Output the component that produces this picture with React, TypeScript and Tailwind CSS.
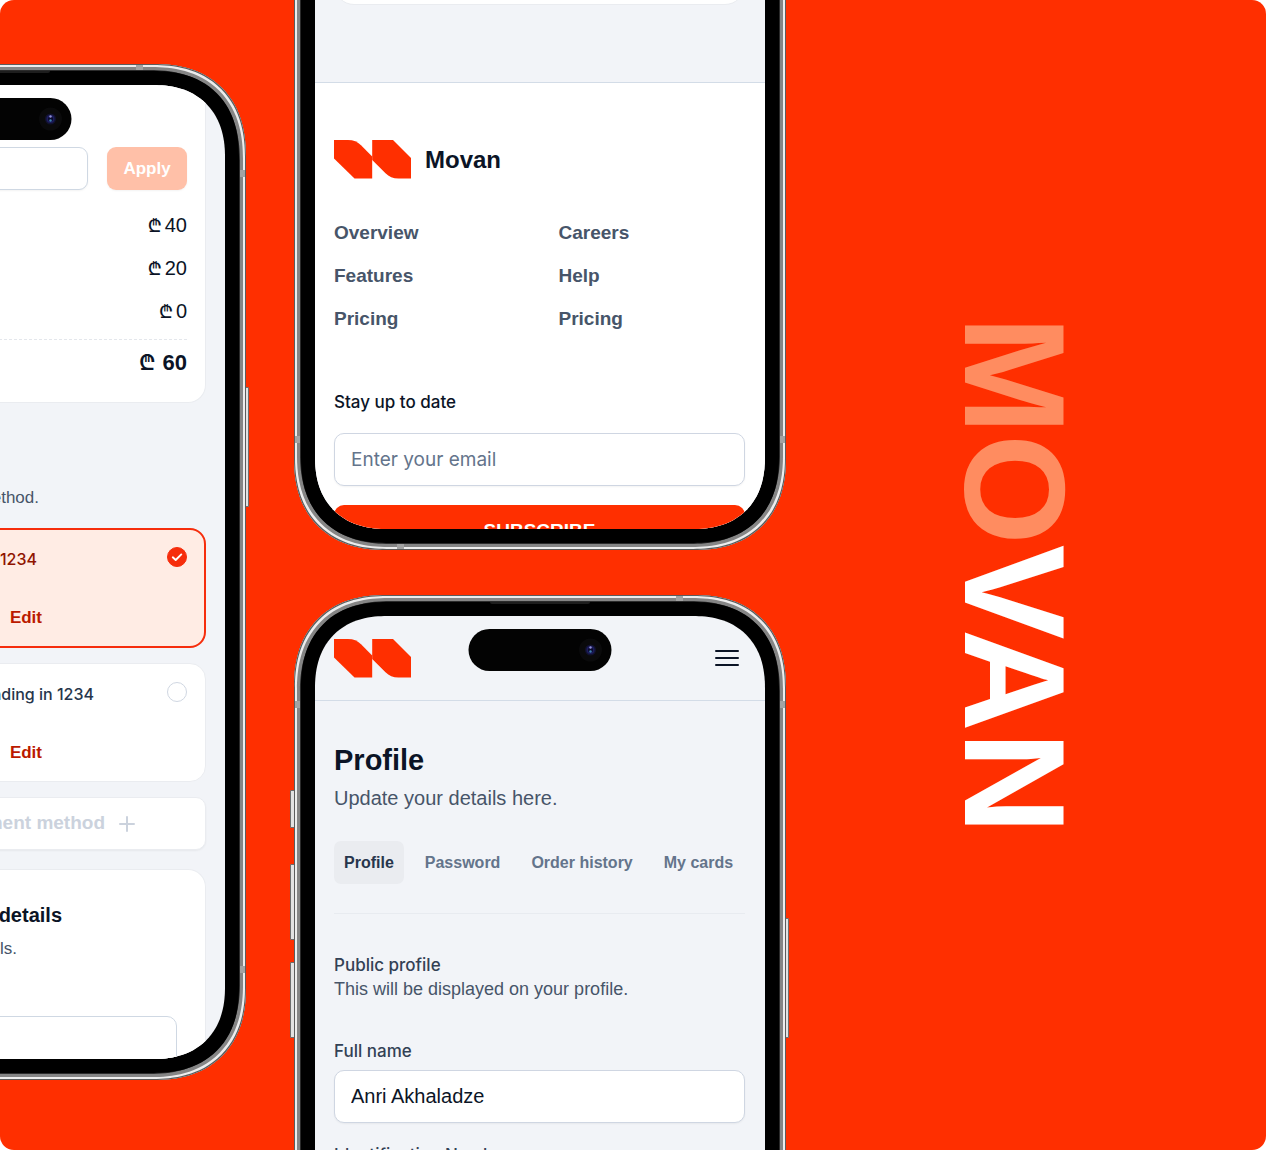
import type { ReactNode } from "react";

function Logo() {
  return (
    <svg className="h-[39px] w-[77px] shrink-0" viewBox="0 0 77 39" fill="#ff2f00" role="img" aria-label="Movan logo">
      <path d="M0 0H14C19.5 0 23.500 1.800 27 5.200L38.200 16.500V38.500H20.500L0 18.500Z" />
      <path d="M38.200 0H59L77 18V38.500H64.500C59 38.500 55 36.700 51.500 33.200L38.200 20Z" />
    </svg>
  );
}

function Camera() {
  return (
    <svg className="size-6" viewBox="0 0 24 24" aria-hidden="true">
      <circle cx="12" cy="12" r="11.500" fill="#0a0a0b" />
      <circle cx="12" cy="12" r="5.500" fill="#12122e" />
      <circle cx="12" cy="12" r="4" fill="#1c1c5e" />
      <circle cx="12" cy="12" r="2.500" fill="#0b0b2c" />
      <circle cx="12" cy="9.500" r="1.200" fill="#8f8fd6" />
      <circle cx="12" cy="13.500" r="1.200" fill="#3f7fb0" />
    </svg>
  );
}

function Phone({ children, className = "", top = true }: { children: ReactNode; className?: string; top?: boolean }) {
  return (
    <div className={`relative w-[492px] shrink-0 ${className}`}>
      {top && (
        <>
          {/* side keys */}
          <i className="absolute top-[195px] -left-1 h-[38px] w-[5px] rounded-l-[1px] border border-[#6d6d6d] bg-[#e2e2e2]" />
          <i className="absolute top-[269px] -left-1 h-[76px] w-[5px] rounded-l-[1px] border border-[#6d6d6d] bg-[#e2e2e2]" />
          <i className="absolute top-[367px] -left-1 h-[76px] w-[5px] rounded-l-[1px] border border-[#6d6d6d] bg-[#e2e2e2]" />
          <i className="absolute top-[323px] -right-[3px] h-[120px] w-1 rounded-r-[1px] border border-[#6d6d6d] bg-[#e2e2e2]" />
        </>
      )}
      <div className="relative rounded-[84px] bg-[#2b2b2b] p-[7px] shadow-[inset_0_0_0_1px_#5c5c5c,inset_0_0_0_3px_#ededed,inset_0_0_0_6px_#858585] supports-[corner-shape:squircle]:rounded-[92px] supports-[corner-shape:squircle]:[corner-shape:superellipse(1.2)]">
        {/* antenna bands */}
        <i className="absolute top-px right-[103px] h-[5px] w-[7px] bg-[#a3a3a3]" />
        <i className="absolute bottom-px left-[103px] h-[5px] w-[7px] bg-[#a3a3a3]" />
        <i className="absolute top-[106px] left-px h-[7px] w-[5px] bg-[#a3a3a3]" />
        <i className="absolute top-[106px] right-px h-[7px] w-[5px] bg-[#a3a3a3]" />
        <i className="absolute bottom-[107px] left-px h-[7px] w-[5px] bg-[#a3a3a3]" />
        <i className="absolute right-px bottom-[107px] h-[7px] w-[5px] bg-[#a3a3a3]" />
        <i className="absolute top-[7px] left-1/2 z-10 h-[2px] w-[100px] -translate-x-1/2 rounded-b-sm bg-[#1d1d1d]" />
        <div className="rounded-[77px] bg-black p-[14px] supports-[corner-shape:squircle]:rounded-[85px] supports-[corner-shape:squircle]:[corner-shape:superellipse(1.2)]">
          <div className="relative overflow-hidden rounded-[64px] bg-[#f2f4f8] supports-[corner-shape:squircle]:rounded-[72px] supports-[corner-shape:squircle]:[corner-shape:superellipse(1.2)]">
            {children}
            {top && (
              <div className="absolute top-[13px] left-1/2 flex h-[42px] w-[143px] -translate-x-1/2 items-center justify-end rounded-full bg-[#030303] pr-[9px]">
                <Camera />
              </div>
            )}
          </div>
        </div>
      </div>
    </div>
  );
}

const prices = ["40", "20", "0"];

function PaymentCard({ id, selected = false, children }: { id: string; selected?: boolean; children: ReactNode }) {
  return (
    <div
      className={
        selected
          ? "rounded-[16px] border-2 border-[#f62d0c] bg-[#ffece4] p-[17px] pb-4"
          : "rounded-[16px] border border-[#eaecf0] bg-white p-[18px] pb-4"
      }
    >
      <div className="flex items-start justify-between">
        <div className="w-[280px]">
          {children}
          <div className="mt-[35px] flex justify-end pr-[52px] text-[17px] leading-6 font-bold text-[#bb1a00]">
            <button type="button">Edit</button>
          </div>
        </div>
        <span className="relative size-5 shrink-0">
          <input
            id={id}
            type="radio"
            name="payment"
            defaultChecked={selected}
            className="block size-5 appearance-none rounded-full border border-[#d0d7e2] bg-white checked:border-[#f62d0c] checked:bg-[#f62d0c]"
          />
          {selected && (
            <svg className="pointer-events-none absolute inset-0 size-5" viewBox="0 0 20 20" fill="none" stroke="#fff" strokeWidth="1.900" strokeLinecap="round" strokeLinejoin="round" aria-hidden="true">
              <path d="M5.800 10.300L8.700 13L14.300 7.400" />
            </svg>
          )}
        </span>
      </div>
    </div>
  );
}

function CheckoutPhone() {
  return (
    <Phone>
      <div className="h-[974px] pr-[19px] pl-5">
        <section className="rounded-b-[18px] border border-t-0 border-[#eaecf0] bg-white px-[18px] pt-[62px] pb-[17px]">
          <div className="flex gap-[19px]">
            <input
              aria-label="Promo code"
              className="h-[43px] min-w-0 flex-1 rounded-[9px] border border-[#cfd8e3] bg-white px-4 text-[19px] shadow-xs outline-none"
            />
            <button type="button" className="h-[43px] w-[80px] rounded-[9px] bg-[#ffc0a8] text-[17px] font-bold text-white shadow-xs">
              Apply
            </button>
          </div>
          <ul className="mt-[13px] text-[#0b1426]">
            {prices.map((p) => (
              <li key={p} className="flex h-[43px] items-center justify-end gap-[3px] text-[20px]">
                <span className="font-['Noto_Sans'] text-[18px] leading-none font-medium">₾</span>
                {p}
              </li>
            ))}
            <li className="mt-[7px] flex h-[46px] items-center justify-end gap-[7px] border-t border-dashed border-[#e4e7ec] text-[22px] font-bold">
              <span className="font-['Noto_Sans'] text-[21px] leading-none font-semibold">₾</span>60
            </li>
          </ul>
        </section>

        <section className="pt-[83px]">
          <p className="w-[244px] text-right text-[17px] leading-6 whitespace-nowrap text-[#475569]">method.</p>
          <div className="mt-[18px] flex flex-col gap-[15px]">
            <PaymentCard id="card-1" selected>
              <label htmlFor="card-1" className="block pr-[57px] text-right font-['Inter'] text-[16px] leading-6 font-medium text-[#8f1400]">
                in 1234
              </label>
            </PaymentCard>
            <PaymentCard id="card-2">
              <label htmlFor="card-2" className="block text-right font-['Inter'] text-[16px] leading-6 font-medium text-[#27364c]">
                ending in 1234
              </label>
            </PaymentCard>
            <button
              type="button"
              className="flex h-[53px] items-center justify-end gap-[14px] rounded-[10px] border border-[#eaecf0] bg-white pr-[70px] text-[19px] font-bold text-[#cbd2dd] shadow-xs"
            >
              payment method
              <svg className="size-4" viewBox="0 0 16 16" stroke="currentColor" strokeWidth="2" strokeLinecap="round" aria-hidden="true">
                <path d="M8 1V15M1 8H15" />
              </svg>
            </button>
          </div>
        </section>

        <section className="mt-[19px] rounded-t-[18px] border border-b-0 border-[#eaecf0] bg-white px-[28px] pt-[31px] pb-20">
          <h2 className="w-[238px] text-right text-[20px] leading-7 font-bold text-[#0b1426]">details</h2>
          <p className="mt-[8px] w-[193px] text-right text-[17px] leading-6 text-[#475569]">details.</p>
          <input
            aria-label="Name"
            className="mt-[55px] block h-[53px] w-full rounded-[10px] border border-[#cfd8e3] bg-white px-4 outline-none"
          />
        </section>
      </div>
    </Phone>
  );
}

const footerLinks = ["Overview", "Careers", "Features", "Help", "Pricing", "Pricing"];

function FooterPhone() {
  return (
    <Phone className="-mt-[120px]" top={false}>
      <div className="h-[628px]">
        <div className="border-b border-[#d3dce7] pt-5 pr-5 pb-[77px] pl-[19px]">
          <div className="h-[84px] rounded-[20px] border border-[#eaecf0] bg-white" />
        </div>
        <footer className="bg-white pt-[57px] pr-5 pl-[19px]">
          <div className="flex items-center gap-[14px]">
            <Logo />
            <span className="text-[24px] leading-none font-bold text-[#0b1426]">Movan</span>
          </div>
          <nav className="mt-[42px] grid grid-cols-2 gap-x-[38px] gap-y-[19px]">
            {footerLinks.map((t, i) => (
              <a key={i} href="#" className="text-[19px] leading-6 font-bold text-[#475569]">
                {t}
              </a>
            ))}
          </nav>
          <form className="mt-[59px]">
            <label htmlFor="email" className="block font-['Inter'] text-[17px] leading-6 font-medium text-[#0b1426]">
              Stay up to date
            </label>
            <input
              id="email"
              type="email"
              placeholder="Enter your email"
              className="mt-[19px] block h-[53px] w-full rounded-[10px] border border-[#cfd6e2] bg-white px-4 font-['Inter'] text-[19px] shadow-xs outline-none placeholder:text-[#64748b]"
            />
            <button type="button" className="mt-[19px] block h-[53px] w-full rounded-[10px] bg-[#ff2f00] text-[19px] font-bold text-white">
              SUBSCRIBE
            </button>
          </form>
        </footer>
      </div>
    </Phone>
  );
}

const tabs = ["Profile", "Password", "Order history", "My cards"];

function ProfilePhone() {
  return (
    <Phone>
      <header className="flex h-[85px] items-center justify-between border-b border-[#d3dce7] pr-5 pl-[19px]">
        <Logo />
        <button type="button" aria-label="Open menu" className="flex flex-col gap-[5px] p-[6px]">
          <span className="h-[2px] w-6 rounded-full bg-[#0b1426]" />
          <span className="h-[2px] w-6 rounded-full bg-[#0b1426]" />
          <span className="h-[2px] w-6 rounded-full bg-[#0b1426]" />
        </button>
      </header>
      <main className="pt-[41px] pr-5 pb-16 pl-[19px]">
        <h1 className="text-[29px] leading-9 font-bold text-[#0b1426]">Profile</h1>
        <p className="mt-[6px] text-[20px] leading-7 text-[#475569]">Update your details here.</p>
        <div role="tablist" className="mt-[29px] flex gap-[11px]">
          {tabs.map((t, i) => (
            <button
              key={t}
              type="button"
              role="tab"
              aria-selected={i === 0}
              className={`h-[43px] shrink-0 rounded-[7px] px-[10px] text-[16px] font-bold ${i === 0 ? "bg-[#eaecf0] text-[#27364c]" : "text-[#64748b]"}`}
            >
              {t}
            </button>
          ))}
        </div>
        <hr className="mt-[29px] border-[#e8ebf0]" />
        <h2 className="mt-[39px] font-['Inter'] text-[17px] leading-6 font-medium text-[#334155]">Public profile</h2>
        <p className="text-[18px] leading-6 text-[#475569]">This will be displayed on your profile.</p>
        <form className="mt-[38px] font-['Inter'] text-[17px] leading-6 font-medium text-[#334155]">
          <label htmlFor="fullname" className="block">Full name</label>
          <input
            id="fullname"
            defaultValue="Anri Akhaladze"
            className="mt-[7px] block h-[53px] w-full rounded-[10px] border border-[#cfd6e2] bg-white px-4 font-['Liberation_Sans'] text-[20px] font-normal text-[#0b1426] shadow-xs outline-none"
          />
          <label htmlFor="idnumber" className="mt-5 block">Identification Number</label>
          <input
            id="idnumber"
            className="mt-[7px] block h-[53px] w-full rounded-[10px] border border-[#cfd6e2] bg-white px-4 outline-none"
          />
        </form>
      </main>
    </Phone>
  );
}

export default function App() {
  return (
    <div className="bg-white">
      <div className="flex h-screen gap-12 overflow-hidden rounded-[14px] bg-[#ff2f00] font-['Liberation_Sans',Arial,sans-serif]">
        <div className="flex w-[246px] shrink-0 justify-end pt-16">
          <CheckoutPhone />
        </div>
        <div className="flex shrink-0 flex-col gap-[45px]">
          <FooterPhone />
          <ProfilePhone />
        </div>
        <div className="flex min-w-0 flex-1 items-center justify-center pr-[73px]">
          <p className="text-[142px] leading-none font-bold whitespace-nowrap text-white [writing-mode:vertical-rl]">
            <span className="text-[#ff8c60]">MO</span>VAN
          </p>
        </div>
      </div>
    </div>
  );
}
